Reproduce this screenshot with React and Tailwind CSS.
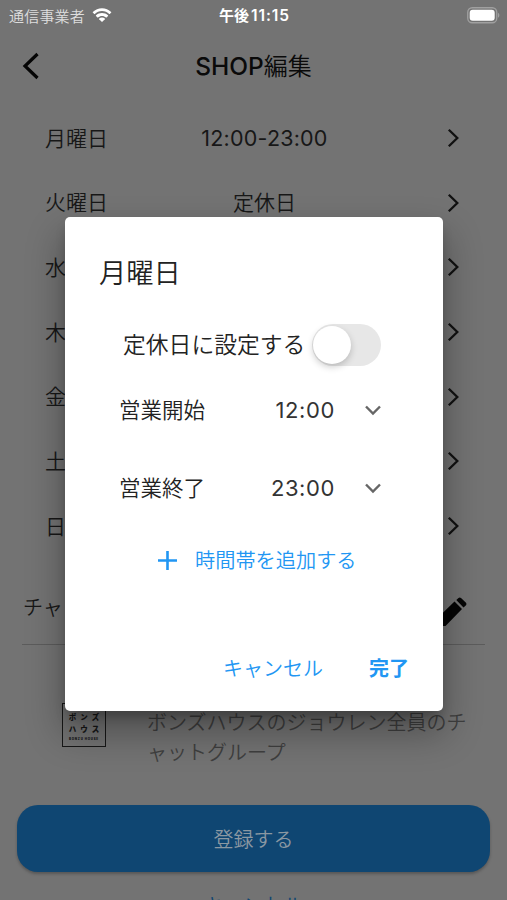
import React from "react";

const days = [
  ["月曜日", "12:00-23:00"],
  ["火曜日", "定休日"],
  ["水曜日", ""],
  ["木曜日", ""],
  ["金曜日", ""],
  ["土曜日", ""],
  ["日曜日", ""],
];

function StatusBar() {
  return (
    <div className="grid h-[30px] grid-cols-3 items-center pl-[9px] pr-[7px] text-white">
      <div className="flex items-center gap-[7px]">
        <span className="whitespace-nowrap text-[15px] leading-none tracking-[0.2px] text-[#dedede]">通信事業者</span>
        <svg width="20" height="15" viewBox="0 0 20 15" fill="currentColor">
          <path d="M10 3.1c2.8 0 5.3 1.1 7.2 2.9.2.2.4.2.6 0l1.4-1.4c.2-.2.2-.5 0-.7C16.700 1.600 13.500.2 10 .2S3.300 1.600.8 3.900c-.2.2-.2.5 0 .7L2.200 6c.2.2.4.2.6 0C4.700 4.200 7.200 3.100 10 3.100z" />
          <path d="M10 7.900c1.500 0 2.900.6 4 1.500.2.200.4.200.6 0l1.400-1.400c.2-.2.2-.5 0-.7-1.600-1.400-3.700-2.300-6-2.300s-4.400.9-6 2.300c-.2.2-.2.5 0 .7l1.400 1.400c.2.2.4.2.6 0 1.100-.9 2.500-1.500 4-1.500z" />
          <path d="M12.800 10.600c.2-.2.2-.5 0-.7-.8-.6-1.700-1-2.800-1s-2 .4-2.800 1c-.2.2-.2.500 0 .7l2.500 2.500c.2.200.4.200.6 0z" transform="translate(0 .7)" />
        </svg>
      </div>
      <div className="flex items-center justify-center gap-[2px] text-[15px] font-bold leading-[16px]">
        <span className="pb-px">午後</span>
        <span className="pt-px font-['Inter'] text-[15.500px] font-semibold tracking-[0.900px]">11:15</span>
      </div>
      <svg className="justify-self-end" width="33" height="17" viewBox="0 0 33 17">
        <rect x=".75" y=".75" width="29" height="15" rx="4.500" fill="none" stroke="#a0a0a0" strokeWidth="1.300" />
        <rect x="2.700" y="2.700" width="25" height="11" rx="3" fill="#fff" />
        <path d="M31 5.800c1.800.7 1.800 4.200 0 4.900z" fill="#a0a0a0" />
      </svg>
    </div>
  );
}

function DayRow({ day, hours }) {
  return (
    <div className="flex h-[64.700px] items-center pl-[45px] pr-[48px] text-[21px] text-[#171717]">
      <span className="w-[110px] pb-px">{day}</span>
      <span className="flex-1 pl-[14px] text-center font-['Inter','Noto_Sans_CJK_JP',sans-serif]">
        <span className={hours.includes(":") ? "text-[21.500px] font-normal tracking-[0.200px]" : ""}>{hours}</span>
      </span>
      <span className="flex w-[99px] justify-end">
        <svg width="12" height="20" viewBox="0 0 12 20" fill="none" stroke="#111" strokeWidth="2.300">
          <path d="M1.800 1.700 10.300 10l-8.500 8.300" />
        </svg>
      </span>
    </div>
  );
}

function GroupLogo() {
  return (
    <div className="flex h-[44px] w-[44px] flex-col items-center justify-end border-[1.500px] border-[#171717] pb-[5px] font-black text-[#171717]">
      <span className="mr-[-4px] text-[7.500px] leading-[12px] tracking-[4px]">ボンズ</span>
      <span className="mr-[-4px] text-[7.500px] leading-[12px] tracking-[4px]">ハウス</span>
      <span className="mt-[2px] whitespace-nowrap font-['Inter'] text-[3px] leading-[4px] tracking-[0.700px]">BONZU HOUSE</span>
    </div>
  );
}

function TimeRow({ label, time, className }) {
  return (
    <div className={"flex h-[30px] items-center pl-[54px] pr-[62px] text-[21.500px] text-[#222] " + className}>
      <span className="flex-1 pb-px">{label}</span>
      <span className="mr-[30px] font-['Inter'] text-[22px] font-normal tracking-[0.600px] text-[#333]">{time}</span>
      <svg width="16" height="11" viewBox="0 0 16 11" fill="none" stroke="#666" strokeWidth="2.400">
        <path d="m1 1.500 7 7 7-7" />
      </svg>
    </div>
  );
}

function HoursDialog() {
  return (
    <div className="absolute left-[65px] top-[217px] flex h-[494px] w-[378px] flex-col rounded-[5px] bg-white shadow-[0_20px_36px_3px_rgba(0,0,0,0.300),0_8px_12px_-3px_rgba(0,0,0,0.250)]">
      <h2 className="mt-[34px] pl-[34px] text-[27.300px] font-[350] leading-[40px] text-[#222]">月曜日</h2>
      <div className="mt-[33px] flex h-[42px] items-center pl-[58px]">
        <span className="w-[188.500px] whitespace-nowrap pb-[2px] text-[22.800px] text-[#222]">定休日に設定する</span>
        <span className="flex h-[42px] w-[69px] items-center rounded-full bg-[#e7e7e7] px-[1.500px]">
          <span className="h-[38px] w-[38px] rounded-full bg-white shadow-[0_3px_7px_rgba(0,0,0,0.200)]" />
        </span>
      </div>
      <TimeRow label="営業開始" time="12:00" className="mt-[29px]" />
      <TimeRow label="営業終了" time="23:00" className="mt-[48px]" />
      <div className="mt-[42px] flex h-[30px] items-center pl-[93px] text-[20.200px] text-[#2196f3]">
        <svg width="19" height="19" viewBox="0 0 19 19" stroke="#2196f3" strokeWidth="2.600">
          <path d="M9.500 0v19M0 9.500h19" />
        </svg>
        <span className="ml-[18px]">時間帯を追加する</span>
      </div>
      <div className="mt-[78px] flex h-[30px] items-center justify-end pr-[34px] text-[20px] text-[#2196f3]">
        <span>キャンセル</span>
        <span className="ml-[46px] font-bold">完了</span>
      </div>
    </div>
  );
}

export default function App() {
  return (
    <div className="relative h-[900px] w-[507px] overflow-hidden bg-[#737373] font-['Noto_Sans_CJK_JP',sans-serif] font-[350]">
      <StatusBar />
      <header className="grid h-[72px] grid-cols-[1fr_auto_1fr] items-center">
        <svg className="ml-[22px]" width="18" height="28" viewBox="0 0 18 28" fill="none" stroke="#050505" strokeWidth="3.200">
          <path d="M15.500 2 3 14l12.500 12" />
        </svg>
        <h1 className="text-[24px] font-[350] leading-none text-[#0a0a0a]">
          <span className="font-['Inter'] text-[24.500px] font-medium">SHOP</span>編集
        </h1>
      </header>
      <main className="pt-[3.500px]">
        {days.map(([day, hours]) => (
          <DayRow key={day} day={day} hours={hours} />
        ))}
        <section className="mx-[22px] flex h-[87px] items-center justify-between border-b border-[#5c5c5c]">
          <span className="pl-px pt-[12px] text-[20px] text-[#171717]">チャット</span>
          <svg className="mr-[18px] mt-[20px]" width="29" height="29" viewBox="0 0 29 29" fill="#050505">
            <path d="M0 29v-8.500L16.500 4.500l7.500 7.500L7.500 29zM18.300 3 20.500 1q1.200-1 2.500 0L28 5.700q1 1.300 0 2.500l-2.500 2.300z" />
          </svg>
        </section>
        <section className="flex pl-[62px] pt-[58px]">
          <GroupLogo />
          <p className="ml-[41px] mt-[4px] w-[325px] text-[20px] leading-[30px] text-[#3f3f3f]">
            ボンズハウスのジョウレン全員のチ<br />ャットグループ
          </p>
        </section>
        <button className="mx-[17px] mt-[38px] flex h-[67px] w-[473px] items-center justify-center rounded-[21px] bg-[#0f4672] text-[20px] text-[#8b98a2] shadow-[0_2px_3px_rgba(0,0,0,0.250)]">
          登録する
        </button>
        <div className="mt-[18px] text-center text-[20px] leading-[30px] text-[#0f4672]">キャンセル</div>
      </main>
      <HoursDialog />
    </div>
  );
}
